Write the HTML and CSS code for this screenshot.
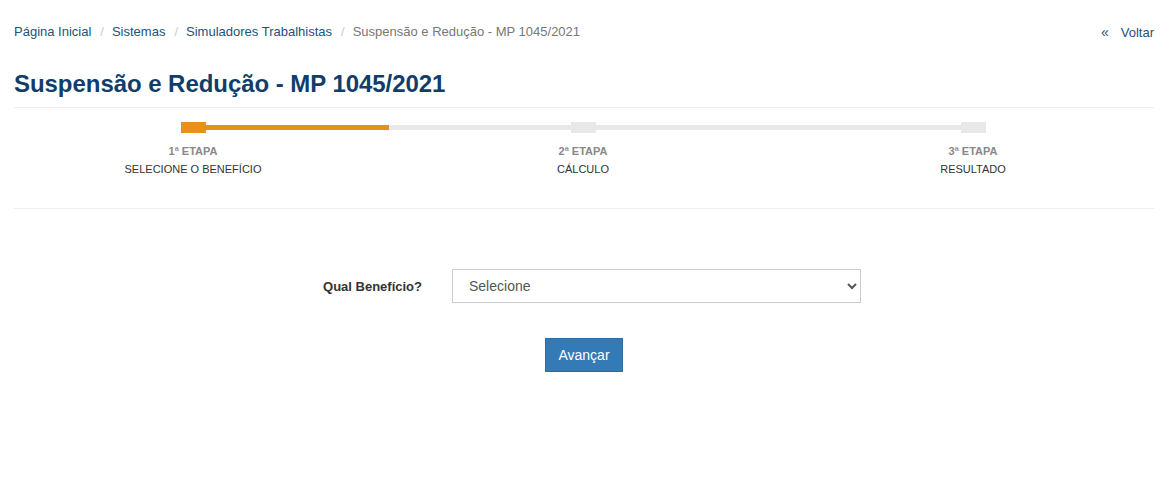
FILE: index.html
```html
<!DOCTYPE html>
<html lang="pt-BR">
<head>
    <meta charset="UTF-8">
    <meta name="viewport" content="width=device-width, initial-scale=1.0">
    <title>Suspensão e Redução - MP 1045/2021</title>
    <link rel="stylesheet" href="styles.css">
</head>
<body>
    <div class="page">
        <div class="topbar">
            <ol class="breadcrumb">
                <li><a href="#">Página Inicial</a></li>
                <li><a href="#">Sistemas</a></li>
                <li><a href="#">Simuladores Trabalhistas</a></li>
                <li class="active">Suspensão e Redução - MP 1045/2021</li>
            </ol>
            <a class="back" href="#"><span class="back-icon">«</span>Voltar</a>
        </div>

        <h1 class="title">Suspensão e Redução - MP 1045/2021</h1>

        <div class="wizard">
            <div class="track">
                <div class="marker done"></div>
                <div class="segment"><div class="fill" style="width: 183px"></div></div>
                <div class="marker"></div>
                <div class="segment"></div>
                <div class="marker"></div>
            </div>
            <div class="steps">
                <div class="step">
                    <div class="step-num">1ª ETAPA</div>
                    <div class="step-name">SELECIONE O BENEFÍCIO</div>
                </div>
                <div class="step">
                    <div class="step-num">2ª ETAPA</div>
                    <div class="step-name">CÁLCULO</div>
                </div>
                <div class="step">
                    <div class="step-num">3ª ETAPA</div>
                    <div class="step-name">RESULTADO</div>
                </div>
            </div>
        </div>

        <form class="form">
            <div class="form-row">
                <label class="form-label" for="beneficio">Qual Benefício?</label>
                <select class="form-select" id="beneficio">
                    <option>Selecione</option>
                    <option>Suspensão do contrato</option>
                    <option>Redução de jornada e salário</option>
                </select>
            </div>
            <div class="form-actions">
                <button type="button" class="btn">Avançar</button>
            </div>
        </form>
    </div>
</body>
</html>
```

FILE: styles.css
```css
body {
    margin: 0;
    background: #fff;
    font-family: "Liberation Sans", Arial, sans-serif;
    font-size: 13px;
    color: #333;
}
a {
    color: #23527c;
    text-decoration: none;
}
.page {
    padding: 0 12px 0 14px;
}
.topbar {
    display: flex;
    justify-content: space-between;
    align-items: center;
    padding-top: 23px;
    height: 18px;
}
.breadcrumb {
    display: flex;
    margin: 0;
    padding: 0;
    list-style: none;
    line-height: 18px;
}
.breadcrumb li + li::before {
    content: "/";
    color: #ccc;
    padding: 0 8px 0 9px;
}
.breadcrumb .active {
    color: #777;
}
.back {
    line-height: 18px;
}
.back-icon {
    margin-right: 12px;
    font-size: 14px;
}
.title {
    margin: 28px 0 0;
    padding-bottom: 9px;
    border-bottom: 1px solid #eee;
    font-size: 24px;
    line-height: 29px;
    letter-spacing: -0.05px;
    color: #113d6b;
}
.wizard {
    padding-top: 14px;
    padding-bottom: 32px;
    border-bottom: 1px solid #eee;
}
.track {
    display: flex;
    align-items: center;
    margin-left: 167px;
}
.marker {
    width: 25px;
    height: 11px;
    background: #e8e8e8;
}
.marker.done {
    background: #e8901a;
}
.segment {
    width: 365px;
    height: 5px;
    background: #e8e8e8;
}
.fill {
    height: 100%;
    background: #e8901a;
}
.steps {
    display: grid;
    grid-template-columns: repeat(3, 390px);
    margin-left: -16px;
    margin-top: 11px;
    text-align: center;
    font-size: 11px;
}
.step-num {
    font-weight: bold;
    color: #888;
    line-height: 14px;
}
.step-name {
    margin-top: 4px;
    line-height: 14px;
    color: #333;
}
.form {
    padding-top: 60px;
}
.form-row {
    display: flex;
    align-items: center;
    gap: 30px;
}
.form-label {
    width: 408px;
    text-align: right;
    font-weight: bold;
    font-size: 13px;
}
.form-select {
    width: 409px;
    height: 34px;
    padding: 6px 12px;
    border: 1px solid #ccc;
    border-radius: 0;
    background: #fff;
    font-family: inherit;
    font-size: 14px;
    color: #555;
}
.form-actions {
    display: flex;
    justify-content: center;
    margin-top: 35px;
}
.btn {
    height: 34px;
    padding: 6px 12px;
    border: 1px solid #2e6da4;
    border-radius: 0;
    background: #337ab7;
    color: #fff;
    font-family: inherit;
    font-size: 14px;
}
```
